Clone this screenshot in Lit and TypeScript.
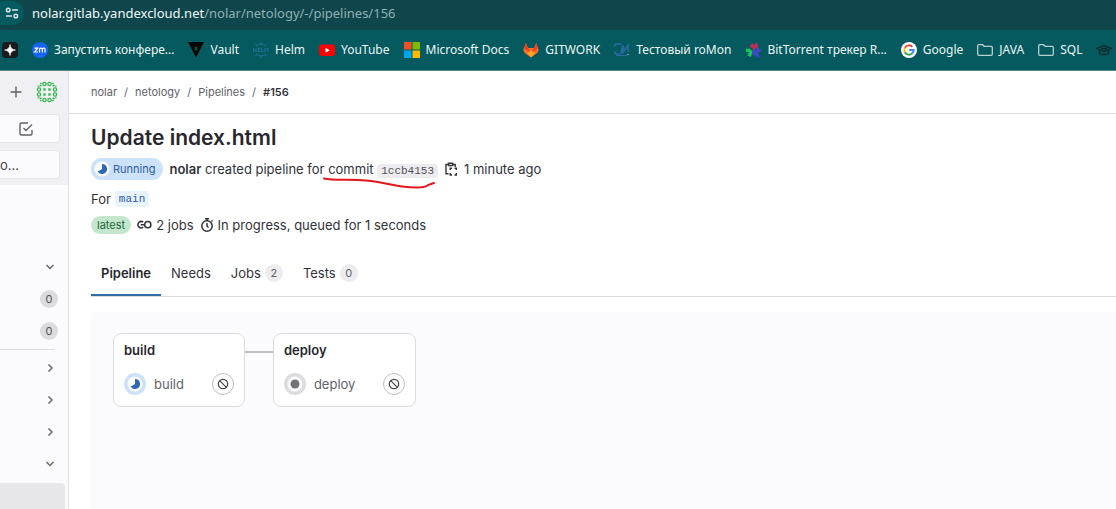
import { LitElement, html, css, svg, TemplateResult } from "lit";
import { customElement } from "lit/decorators.js";

const icons: Record<string, TemplateResult> = {
  tune: html`<svg width="16" height="16" viewBox="0 0 16 16" fill="none" stroke="#d5e6e7" stroke-width="1.5"><circle cx="4.2" cy="5" r="1.8"/><path d="M8 5h6M2 11h6"/><circle cx="11.8" cy="11" r="1.8"/></svg>`,
  spark: html`<svg width="16" height="16" viewBox="0 0 16 16"><rect width="16" height="16" rx="4" fill="#1b1b1f"/><path d="M8 2.5Q8.500 7.500 13.500 8 8.500 8.500 8 13.500 7.500 8.500 2.500 8 7.500 7.500 8 2.500Z" fill="#fff" stroke="#fff" stroke-width=".6"/></svg>`,
  zoom: html`<svg width="16" height="16" viewBox="0 0 16 16"><circle cx="8" cy="8" r="8" fill="#1764f5"/><path d="M2.500 6.200h3.200L2.600 10h3.300M7.500 10.400V7.500q0-1.300 1.400-1.300t1.400 1.300v2.900m0-2.900q0-1.300 1.400-1.300t1.400 1.300v2.900" fill="none" stroke="#fff" stroke-width="1.200"/></svg>`,
  vault: html`<svg width="16" height="16" viewBox="0 0 16 16"><path d="M0 0h16L8 15.500Z" fill="#060606"/><path d="M6.500 5h3v2.500L8 9 6.500 7.500Z" fill="#174347"/></svg>`,
  helm: html`<svg width="16" height="16" viewBox="0 0 16 16" fill="none" stroke="#1f7094"><path d="M3.500 4a6 6 0 0 1 9 0M3.500 12a6 6 0 0 0 9 0M8 0v2.500M8 13.500V16M2 1.500l2 2.300M14 1.500l-2 2.300M2 14.500l2-2.300M14 14.500l-2-2.300"/><path d="M.5 6v4M3 6v4M.5 8H3M7 6.500H5v3h2M5 8h2M8.700 6v3.500h2M12 10V6l1.500 2L15 6v4"/></svg>`,
  youtube: html`<svg width="16" height="16" viewBox="0 0 16 16"><rect y="2.500" width="16" height="11.500" rx="3" fill="#f00"/><path d="M6.500 5.800v5l4.300-2.500Z" fill="#fff"/></svg>`,
  microsoft: html`<svg width="16" height="16" viewBox="0 0 16 16"><path fill="#f25022" d="M0 0h7.500v7.500H0z"/><path fill="#7fba00" d="M8.500 0H16v7.500H8.500z"/><path fill="#00a4ef" d="M0 8.500h7.500V16H0z"/><path fill="#ffb900" d="M8.500 8.500H16V16H8.500z"/></svg>`,
  gitlab: html`<svg width="16" height="16" viewBox="0 0 16 16"><path d="M2.800 1 .9 6.300Q-.5 9.500 2.500 11.500L8 15.500l5.500-4q3-2 1.600-5.200L13.200 1 11 6H5Z" fill="#fc6d26"/><path d="M2.800 1 .9 6.300 8 11 5 6ZM13.200 1l1.900 5.300L8 11 11 6Z" fill="#e24329"/><path d="M4 11 8 8.500l4 2.500-4 4.500Z" fill="#fca326"/></svg>`,
  romon: html`<svg width="16" height="16" viewBox="0 0 16 16" fill="none" stroke="#2c6aa3" stroke-width="1.500"><path d="M7.500 2.800A5.200 5.200 0 1 0 5.500 12M6.500 12 9 3.500v7L14 3v7"/><path d="M2 13.500h11" stroke-width="1"/><circle cx="14" cy="12.500" r=".8" fill="#8fb4cc" stroke="none"/></svg>`,
  torrent: html`<svg width="16" height="16" viewBox="0 0 16 16" stroke-width="3" fill="none"><path d="M5.500 5 7.500 3.500 9 6l2-3 1.500 2.500" stroke="#bb2e58"/><path d="M1 8.500 4 8l2 2-1 3-2-1" stroke="#19c65a"/><path d="M11 6.500l3 2-3 1.500 1.500 3.500-4-2V8" stroke="#3a49c4"/></svg>`,
  google: html`<svg width="16" height="16" viewBox="0 0 16 16"><circle cx="8" cy="8" r="8" fill="#fff"/><g fill="none" stroke-width="2"><path d="M11.300 4.700A4.700 4.700 0 0 0 3.900 5.700" stroke="#ea4335"/><path d="M3.900 5.700a4.700 4.700 0 0 0 0 4.600" stroke="#fbbc05"/><path d="M3.900 10.300a4.700 4.700 0 0 0 7.200 1.200" stroke="#34a853"/><path d="M11.100 11.500A4.700 4.700 0 0 0 12.700 8H8.200" stroke="#4285f4"/></g></svg>`,
  folder: html`<svg width="16" height="16" viewBox="0 0 16 16" fill="none" stroke="#b9cfd0" stroke-width="1.300"><path d="M.7 3.800q0-1.100 1.100-1.100h3.800l1.600 1.600h7q1.100 0 1.100 1.100v6.800q0 1.100-1.100 1.100H1.800q-1.100 0-1.100-1.100Z"/></svg>`,
  cap: html`<svg width="16" height="16" viewBox="0 0 16 16" fill="none" stroke="#10282a" stroke-width="1.300"><path d="M.5 6.500 8 3.500l7.500 3L8 9.500ZM3.500 8v3.500q4.500 2.500 9 0V8M5 6.500h6"/></svg>`,
  plus: html`<svg width="16" height="16" viewBox="0 0 16 16" stroke="#626168" stroke-width="1.400"><path d="M8 2.500v11M2.500 8h11"/></svg>`,
  todo: html`<svg width="16" height="16" viewBox="0 0 16 16" fill="none" stroke="#626168" stroke-width="1.400"><path d="M10 2H3.500Q2 2 2 3.500v9Q2 14 3.500 14h9q1.500 0 1.500-1.500V9M5.500 7 8 9.500 14 3.500"/></svg>`,
  down: html`<svg width="12" height="12" viewBox="0 0 12 12" fill="none" stroke="#6a6970" stroke-width="1.500"><path d="m2.500 4 3.500 3.500L9.500 4"/></svg>`,
  right: html`<svg width="12" height="12" viewBox="0 0 12 12" fill="none" stroke="#6a6970" stroke-width="1.500"><path d="M4.500 2.500 8 6 4.500 9.500"/></svg>`,
  copy: html`<svg width="12" height="14" viewBox="0 0 12 14" fill="none" stroke="#333238" stroke-width="1.400"><path d="M3.500 11.800H1V2.500h2.200M8 2.500h2.200V5M3.500 1.200h4.200v2.300H3.500Z"/><path d="M5.200 8V6.200H7M9.500 6.200h1.800V8M11.300 11v2H9.500M7 13H5.200v-2"/></svg>`,
  jobs: html`<svg width="15" height="14" viewBox="0 0 15 14" fill="none" stroke="#333238" stroke-width="1.500"><path d="M6.200 4.200A3.200 3.200 0 1 0 6.200 9.200M3.700 6.700h3.500"/><circle cx="10.800" cy="6.700" r="3.100"/></svg>`,
  timer: html`<svg width="14" height="14" viewBox="0 0 14 14" fill="none" stroke="#333238" stroke-width="1.500"><circle cx="7" cy="8" r="5.200"/><path d="M5 .8h4M7 1v2M7 5v3l1.500 1.500M11.500 2.500l1 1"/></svg>`,
  cancel: html`<svg width="12" height="12" viewBox="0 0 12 12" fill="none" stroke="#434248" stroke-width="1.200"><circle cx="6" cy="6" r="4.700"/><path d="m2.700 2.700 6.600 6.600"/></svg>`,
};

const running = html`<svg width="22" height="22" viewBox="0 0 22 22"><circle cx="11" cy="11" r="11" fill="#cbe2f9"/><circle cx="11" cy="11" r="7.500" fill="#fff"/><path d="M11 6A5 5 0 1 1 6.700 13.500L11 11Z" fill="#2f68b4"/></svg>`;
const created = html`<svg width="22" height="22" viewBox="0 0 22 22"><circle cx="11" cy="11" r="11" fill="#dcdcde"/><circle cx="11" cy="11" r="7.500" fill="#fff"/><circle cx="11" cy="11" r="4.500" fill="#737278"/></svg>`;

const rings = [[8.500, 3], [13.500, 3], [8.500, 19], [13.500, 19], [3, 8.500], [3, 13.500], [19, 8.500], [19, 13.500]];
const squares = [8.500, 13.500].flatMap((x) => [8.500, 13.500].map((y) => [x, y]));
const corners = [4.500, 17.500].flatMap((x) => [4.500, 17.500].map((y) => [x, y]));
const avatar = html`<svg width="22" height="22" viewBox="0 0 22 22" fill="none" stroke="#35b64f" stroke-width="1.200">
  ${rings.map(([x, y]) => svg`<circle cx=${x} cy=${y} r="1.700"/>`)}
  ${squares.map(([x, y]) => svg`<rect x=${x - 1.2} y=${y - 1.2} width="2.400" height="2.400" fill="#35b64f" stroke="none"/>`)}
  ${corners.map(([x, y]) => svg`<circle cx=${x} cy=${y} r="1.100" fill="#35b64f" stroke="none"/>`)}
  <path d="M4 2.200h2M16 2.200h2M4 19.800h2M16 19.800h2M2.200 4.500v1.500M2.200 16v1.500M19.800 4.500v1.500M19.800 16v1.500" stroke-width="1.100"/>
</svg>`;

@customElement("browser-bar")
class BrowserBar extends LitElement {
  static styles = css`
    :host { display: block; color: #eef6f6; font-family: "Noto Sans", sans-serif; background: #045a5e; border-bottom: 1px solid #5d8588; }
    .address { display: flex; align-items: center; height: 30px; background: #0f464c; overflow: hidden; }
    .site { display: flex; align-items: center; justify-content: center; width: 24px; height: 24px; border: 0; padding: 0; border-radius: 0 12px 12px 0; background: #045a5e; margin-bottom: 4px; }
    .url { flex: 1; padding: 0 0 4px 8px; font-size: 13px; line-height: 18px; color: #8fb0b3; white-space: nowrap; }
    .host { color: #f2f9f9; }
    .bookmarks { display: flex; align-items: center; height: 40px; padding-left: 2px; gap: 14px; overflow: hidden; }
    .mark { display: flex; flex: none; align-items: center; gap: 6px; color: inherit; text-decoration: none; font-size: 12px; line-height: 16px; white-space: nowrap; }
    svg { flex: none; display: block; }
  `;
  marks: [string, string][] = [
    ["spark", ""], ["zoom", "Запустить конфере..."], ["vault", "Vault"], ["helm", "Helm"], ["youtube", "YouTube"],
    ["microsoft", "Microsoft Docs"], ["gitlab", "GITWORK"], ["romon", "Тестовый roMon"], ["torrent", "BitTorrent трекер R..."],
    ["google", "Google"], ["folder", "JAVA"], ["folder", "SQL"], ["cap", ""],
  ];
  render() {
    return html`
      <div class="address">
        <button class="site" aria-label="Site information">${icons.tune}</button>
        <div class="url"><span class="host">nolar.gitlab.yandexcloud.net</span>/nolar/netology/-/pipelines/156</div>
      </div>
      <nav class="bookmarks">
        ${this.marks.map(([icon, name]) => html`<a class="mark" href="#" aria-label=${name || icon}>${icons[icon]}${name ? html`<span>${name}</span>` : ""}</a>`)}
      </nav>`;
  }
}

@customElement("side-bar")
class SideBar extends LitElement {
  static styles = css`
    :host { display: block; width: 68px; border-right: 1px solid #e2e1e6; background: #fbfafd; overflow: hidden; }
    button { font: inherit; color: #434248; padding: 0; border: 0; background: none; }
    svg { display: block; }
    .top { display: flex; flex-direction: column; gap: 7px; height: 114px; padding: 0 8px 0 0; box-sizing: border-box; background: #f0eff3; }
    .tools { display: flex; align-items: center; gap: 12px; padding: 10px 0 4px 8px; }
    .box { display: flex; align-items: center; flex: none; height: 29px; box-sizing: border-box; border: 1px solid #e6e5ea; border-left: 0; border-radius: 0 4px 4px 0; background: #fbfafd; font-size: 13px; }
    .task { padding-left: 18px; }
    .list { display: flex; flex-direction: column; padding-top: 66px; }
    .row { display: flex; align-items: center; justify-content: flex-end; height: 32px; padding-right: 12px; }
    .counts { padding-right: 10px; }
    .badge { min-width: 18px; height: 18px; border-radius: 9px; background: #dcdcde; color: #535158; font-size: 11px; line-height: 18px; text-align: center; }
    .rule { height: 1px; margin: 2px 13px 2px 0; background: #dcdcde; }
    .active { height: 40px; margin: 3px 3px 0 0; border-radius: 0 4px 4px 0; background: #e7e6ea; }
  `;
  render() {
    return html`
      <div class="top">
        <div class="tools"><button aria-label="Create new">${icons.plus}</button><button aria-label="Profile">${avatar}</button></div>
        <button class="box task" aria-label="To-Do List">${icons.todo}</button>
        <button class="box">o...</button>
      </div>
      <div class="list">
        <button class="row" aria-label="Collapse section">${icons.down}</button>
        <div class="row counts"><span class="badge">0</span></div>
        <div class="row counts"><span class="badge">0</span></div>
        <div class="rule"></div>
        ${["Manage", "Plan", "Code"].map((n) => html`<button class="row" aria-label=${n}>${icons.right}</button>`)}
        <button class="row" aria-label="Build">${icons.down}</button>
        <div class="active"></div>
      </div>`;
  }
}

@customElement("stage-card")
class StageCard extends LitElement {
  static properties = { name: {}, status: {} };
  declare name: string;
  declare status: string;
  static styles = css`
    :host { display: block; box-sizing: border-box; padding: 8px 10px 11px; border: 1px solid #dcdcde; border-radius: 8px; background: #fff; }
    .title { margin: 0 0 15px; font-size: 13px; line-height: 16px; font-weight: 600; color: #28272d; }
    .job { display: flex; align-items: center; gap: 8px; font-size: 13px; line-height: 22px; color: #626168; }
    .stop { display: flex; align-items: center; justify-content: center; box-sizing: border-box; width: 22px; height: 22px; margin-left: auto; padding: 0; border: 1px solid #bfbfc3; border-radius: 50%; background: #fff; }
    .name { padding-right: 20px; }
    svg { display: block; flex: none; }
  `;
  render() {
    return html`
      <h2 class="title">${this.name}</h2>
      <div class="job">${this.status === "running" ? running : created}<span class="name">${this.name}</span>
        <button class="stop" aria-label="Cancel ${this.name}">${icons.cancel}</button></div>`;
  }
}

@customElement("app-root")
class AppRoot extends LitElement {
  static styles = css`
    :host { display: flex; flex-direction: column; height: 100vh; overflow: hidden; background: #fff; color: #333238; font-family: Inter, sans-serif; font-size: 13px; line-height: 20px; }
    .body { display: flex; flex: 1; min-height: 0; }
    .page { display: flex; flex-direction: column; flex: 1; min-width: 0; }
    svg { display: block; flex: none; }
    a { color: inherit; text-decoration: none; }
    .crumbs { display: flex; align-items: center; gap: 7px; height: 42px; padding-left: 22px; border-bottom: 1px solid #dcdcde; font-size: 11px; color: #626168; }
    .current { font-weight: 600; color: #333238; }
    .content { display: flex; flex-direction: column; flex: 1; min-height: 0; padding-left: 22px; }
    .title { margin: 10px 0 6px; font-size: 21px; line-height: 28px; font-weight: 600; color: #28272d; }
    .line { position: relative; display: flex; align-items: center; gap: 7px; height: 22px; white-space: nowrap; }
    .status { display: flex; align-items: center; height: 22px; padding-right: 7px; box-sizing: border-box; border-radius: 11px; background: #cbe2f9; color: #2f5ca0; font-size: 11px; line-height: 20px; }
    .author { font-weight: 600; }
    .code { padding: 1px 4px; border-radius: 4px; background: #ececef; color: #535158; font-family: "Liberation Mono", monospace; font-size: 11px; line-height: 14px; }
    .branch { background: #e9f3fc; color: #2f5ca0; }
    .copy { padding: 0; border: 0; background: none; }
    .ref { gap: 4px; margin-top: 8px; }
    .meta { gap: 6px; margin-top: 4px; }
    .item { display: flex; align-items: center; gap: 4px; }
    .latest { padding: 0 6px; border-radius: 9px; background: #c3e6cd; color: #24663b; font-size: 11px; line-height: 18px; }
    .mark { position: absolute; left: 231px; top: 18px; overflow: visible; pointer-events: none; }
    .tabs { display: flex; margin-top: 15px; border-bottom: 1px solid #dcdcde; }
    .tab { display: flex; align-items: center; gap: 4px; height: 45px; padding: 0 10px; box-sizing: border-box; border: 0; border-bottom: 2px solid transparent; background: none; color: inherit; font: inherit; }
    .selected { border-color: #2f6ca8; font-weight: 600; color: #28272d; }
    .count { min-width: 18px; border-radius: 9px; background: #ececef; color: #626168; font-size: 11px; line-height: 18px; text-align: center; }
    .graph { display: flex; flex: 1; align-items: flex-start; margin-top: 15px; padding: 21px 22px; border-radius: 4px 0 0 0; background: #fbfafd; }
    .link { width: 28px; height: 2px; margin-top: 18px; background: #bfbfc3; }
  `;
  render() {
    return html`
      <browser-bar></browser-bar>
      <div class="body">
        <side-bar></side-bar>
        <main class="page">
          <nav class="crumbs"><a href="#">nolar</a><span>/</span><a href="#">netology</a><span>/</span><a href="#">Pipelines</a><span>/</span><a class="current" href="#">#156</a></nav>
          <div class="content">
            <h1 class="title">Update index.html</h1>
            <div class="line">
              <span class="status">${running}Running</span>
              <span><b class="author">nolar</b> created pipeline for commit <a class="code" href="#">1ccb4153</a></span>
              <button class="copy" aria-label="Copy commit SHA">${icons.copy}</button>
              <span>1 minute ago</span>
              <svg class="mark" width="114" height="12" viewBox="0 0 114 12" fill="none" stroke="#e3161c" stroke-width="2" stroke-linecap="round"><path d="M2 2.500C12 5 28 3 44 4.500S68 9 80 10.500 104 12 106 9L112 7"/></svg>
            </div>
            <div class="line ref"><span>For</span><a class="code branch" href="#">main</a></div>
            <div class="line meta"><span class="latest">latest</span><span class="item">${icons.jobs}2 jobs</span><span class="item">${icons.timer}In progress, queued for 1 seconds</span></div>
            <div class="tabs" role="tablist">
              <button class="tab selected" role="tab" aria-selected="true">Pipeline</button>
              <button class="tab" role="tab">Needs</button>
              <button class="tab" role="tab">Jobs <span class="count">2</span></button>
              <button class="tab" role="tab">Tests <span class="count">0</span></button>
            </div>
            <div class="graph"><stage-card name="build" status="running"></stage-card><div class="link"></div><stage-card name="deploy" status="created"></stage-card></div>
          </div>
        </main>
      </div>`;
  }
}
